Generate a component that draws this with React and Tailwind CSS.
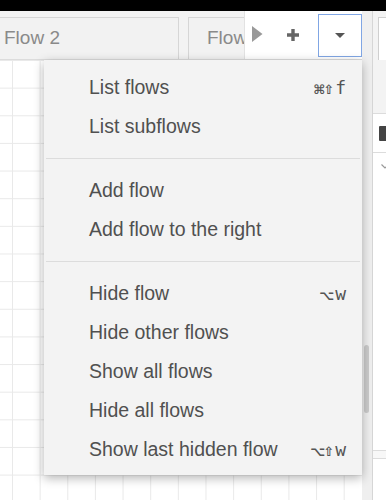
import React from 'react';

const groups = [
  [
    { label: 'List flows', mods: '⌘⇧', key: 'f' },
    { label: 'List subflows' },
  ],
  [
    { label: 'Add flow' },
    { label: 'Add flow to the right' },
  ],
  [
    { label: 'Hide flow', mods: '⌥', key: 'w' },
    { label: 'Hide other flows' },
    { label: 'Show all flows' },
    { label: 'Hide all flows' },
    { label: 'Show last hidden flow', mods: '⌥⇧', key: 'w' },
  ],
];

function Shortcut({ mods, k }) {
  return (
    <span className="flex items-baseline text-[#555]">
      <span className="font-['DejaVu_Sans',sans-serif] text-[13px] font-bold tracking-[-2px]">{mods}</span>
      <span className="font-['DejaVu_Sans_Mono',monospace] text-[18px] ml-[3px]">{k}</span>
    </span>
  );
}

function FlowMenu() {
  return (
    <div className="absolute left-[44px] top-[49px] w-[318px] bg-[#f3f3f3] pt-[8px] pb-[6px] shadow-[0_3px_10px_rgba(0,0,0,0.3)]">
      {groups.map((group, gi) => (
        <div key={gi}>
          {gi > 0 && <div className="h-px mx-[2px] my-[12px] bg-[#dcdcdc]" />}
          {group.map((item) => (
            <div key={item.label} className="h-[39px] flex items-center justify-between pl-[45px] pr-[16px] text-[19.5px] text-[#505050]">
              <span>{item.label}</span>
              {item.mods && <Shortcut mods={item.mods} k={item.key} />}
            </div>
          ))}
        </div>
      ))}
    </div>
  );
}

function Workspace() {
  return (
    <div className="w-[362px] shrink-0 relative flex flex-col">
      <div className="h-[49px] shrink-0 bg-[#f3f3f3] border-b border-[#dcdcdc] flex items-end gap-[9px] overflow-hidden relative">
        <div className="ml-[-15px] w-[194px] h-[42px] shrink-0 border border-b-0 border-[#d6d6d6] bg-[#f2f2f2] flex items-center pl-[18px] text-[19px] text-[#8a8a8a]">
          Flow 2
        </div>
        <div className="w-[192px] h-[42px] shrink-0 border border-b-0 border-[#d6d6d6] bg-[#f2f2f2] flex items-center pl-[18px] text-[19px] text-[#8a8a8a]">
          Flow 3
        </div>
        <div className="absolute right-0 top-0 h-[48px] w-[118px] bg-white border-l border-[#e2e2e2] flex items-center">
          <svg className="ml-[7px] mt-[-3px]" width="11" height="16" viewBox="0 0 11 16">
            <path d="M0 0 L10.5 8 L0 16 Z" fill="#999" />
          </svg>
          <svg className="ml-[24px] mt-[-1px]" width="12" height="12" viewBox="0 0 12 12">
            <path d="M4.3 0h3.4v4.3H12v3.4H7.7V12H4.3V7.7H0V4.3h4.3z" fill="#666" />
          </svg>
          <div className="ml-[19px] w-[44px] h-[43px] border border-[#80a6e4] flex items-center justify-center">
            <svg width="10" height="5" viewBox="0 0 10 5">
              <path d="M0 0 H10 L5 5 Z" fill="#555" />
            </svg>
          </div>
        </div>
      </div>
      <div className="flex-1 bg-white bg-[linear-gradient(to_right,#e9e9e9_1px,transparent_1px),linear-gradient(to_bottom,#e9e9e9_1px,transparent_1px)] [background-size:27.65px_27.65px] [background-position:12px_0px]" />
      <FlowMenu />
    </div>
  );
}

function Sidebar() {
  return (
    <div className="flex-1 flex flex-col bg-white">
      <div className="h-[102px] bg-[#f3f3f3] pt-[6px] pl-[5px]">
        <div className="h-[43px] bg-white border-l border-t border-[#cfcfcf]" />
      </div>
      <div className="h-[39px] border-t border-[#dcdcdc] flex items-center">
        <div className="ml-[6px] w-[10px] h-[15px] bg-[#444] rounded-[1px]" />
      </div>
      <div className="h-[298px] border-t border-[#dcdcdc] pt-[11px] pl-[8px]">
        <svg width="8" height="5" viewBox="0 0 8 5">
          <path d="M0.5 0.5 L4 4 L7.5 0.5" stroke="#999" strokeWidth="1.2" fill="none" />
        </svg>
      </div>
      <div className="h-[8px] border-t border-[#dcdcdc] bg-[#f7f7f7]" />
      <div className="flex-1 border-t border-[#dcdcdc]" />
    </div>
  );
}

export default function App() {
  return (
    <div className="w-[386px] h-[500px] overflow-hidden bg-white flex flex-col font-['Liberation_Sans',Arial,sans-serif]">
      <div className="h-[11px] shrink-0 bg-black" />
      <div className="flex flex-1 min-h-0">
        <Workspace />
        <div className="w-[11px] shrink-0 bg-[#efefef] border-r border-[#d6d6d6] pt-[334px] pl-[2px]">
          <div className="w-[5px] h-[68px] rounded-[3px] bg-[#cbcbcb]" />
        </div>
        <Sidebar />
      </div>
    </div>
  );
}
